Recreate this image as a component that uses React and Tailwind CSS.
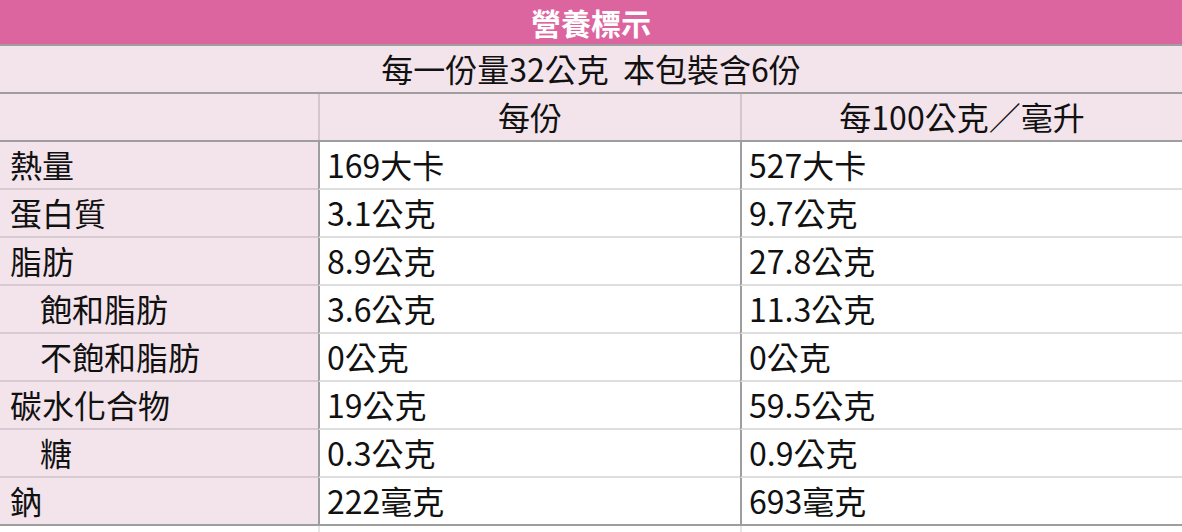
const rows = [
  { name: "熱量", per: "169大卡", per100: "527大卡" },
  { name: "蛋白質", per: "3.1公克", per100: "9.7公克" },
  { name: "脂肪", per: "8.9公克", per100: "27.8公克" },
  { name: "飽和脂肪", per: "3.6公克", per100: "11.3公克", sub: true },
  { name: "不飽和脂肪", per: "0公克", per100: "0公克", sub: true },
  { name: "碳水化合物", per: "19公克", per100: "59.5公克" },
  { name: "糖", per: "0.3公克", per100: "0.9公克", sub: true },
  { name: "鈉", per: "222毫克", per100: "693毫克" },
];

export default function App() {
  return (
    <div
      className="w-[1182px] h-[532px] overflow-hidden bg-white text-[#111] text-[32px] leading-none"
      style={{ fontFamily: '"Noto Sans CJK TC", "Noto Sans", sans-serif' }}
    >
      {/* 標題 */}
      <div className="h-[46px] flex items-center justify-center bg-[#dc659f] border-b-2 border-[#9e9e9e] text-white font-bold text-[30px] leading-[44px]">
        營養標示
      </div>

      <div className="h-[48px] flex items-center justify-center pb-[3px] bg-[#f3e4ec] border-b-2 border-[#9e9e9e]">
        每一份量32公克&nbsp;&nbsp;本包裝含6份
      </div>

      {/* 欄位標題 */}
      <div className="h-[48px] flex bg-[#f3e4ec] border-b-2 border-[#9e9e9e]">
        <div className="w-[318px]" />
        <div className="w-[422px] border-l-2 border-[#d5c5cd] flex items-center justify-center pb-[3px]">
          每份
        </div>
        <div className="flex-1 border-l-2 border-[#d5c5cd] flex items-center justify-center pb-[3px]">
          每100公克／毫升
        </div>
      </div>

      {rows.map((r, i) => {
        const last = i === rows.length - 1;
        return (
          <div key={r.name} className="h-[48px] flex">
            <div
              className={`w-[318px] bg-[#f3e4ec] flex items-center pb-[3px] border-b-2 ${
                last ? "border-[#9e9e9e]" : "border-[#d8cad1]"
              } ${r.sub ? "pl-[40px]" : "pl-[10px]"}`}
            >
              {r.name}
            </div>
            <div
              className={`w-[422px] border-l-2 border-l-[#9e9e9e] flex items-center pl-[7px] pb-[3px] border-b-2 ${
                last ? "border-b-[#9e9e9e]" : "border-b-[#dedede]"
              }`}
            >
              {r.per}
            </div>
            <div
              className={`flex-1 border-l-2 border-l-[#9e9e9e] flex items-center pl-[7px] pb-[3px] border-b-2 ${
                last ? "border-b-[#9e9e9e]" : "border-b-[#dedede]"
              }`}
            >
              {r.per100}
            </div>
          </div>
        );
      })}

      <div className="h-[48px] flex">
        <div className="w-[318px]" />
        <div className="w-[422px] border-l-2 border-[#e6e6e6]" />
        <div className="flex-1 border-l-2 border-[#e6e6e6]" />
      </div>
    </div>
  );
}
